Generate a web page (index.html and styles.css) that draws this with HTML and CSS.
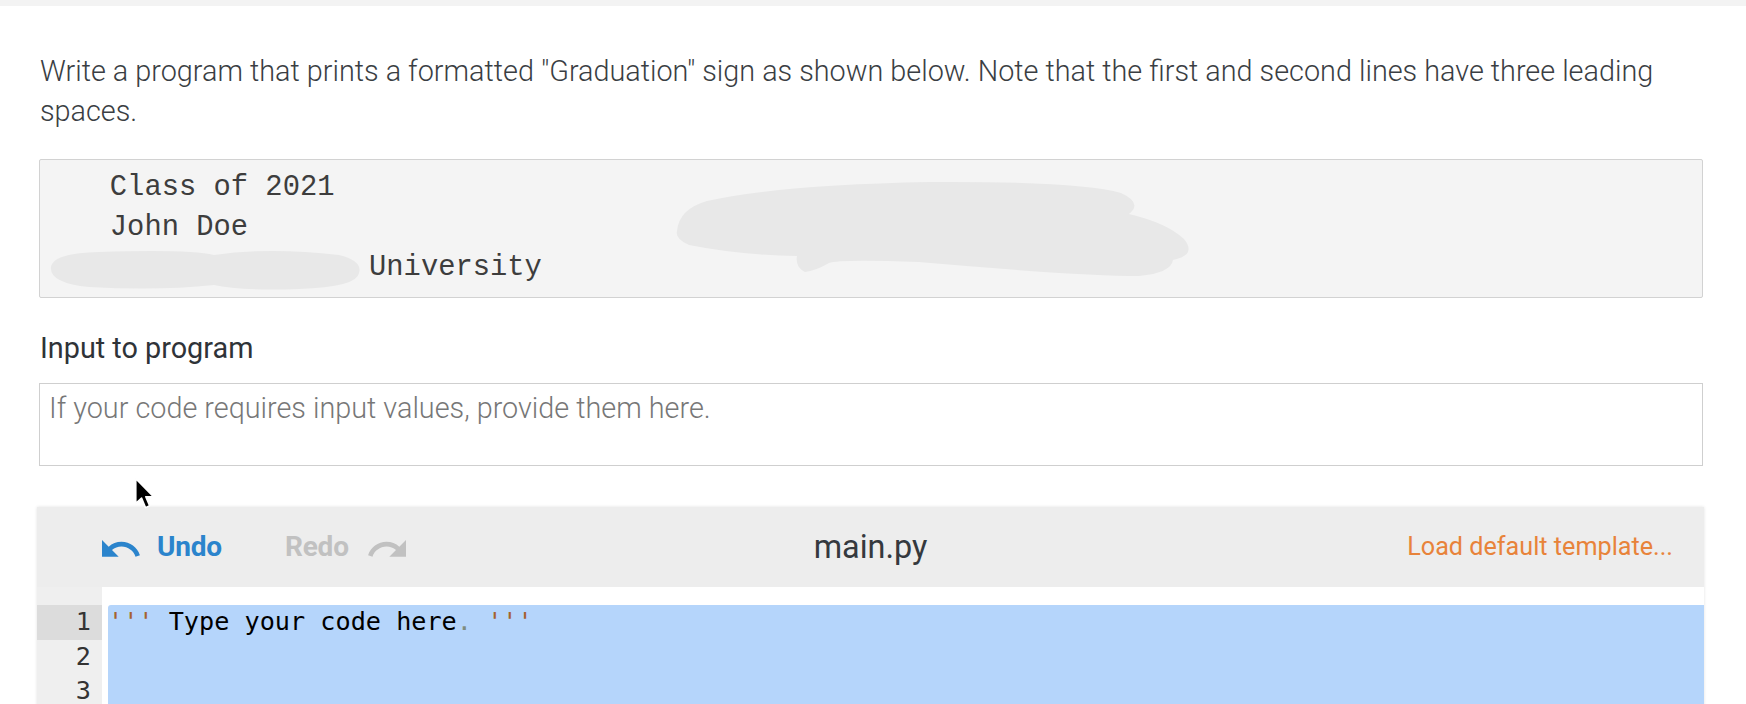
FILE: index.html
```html
<!DOCTYPE html>
<html lang="en">
<head>
<meta charset="utf-8">
<title>Graduation sign</title>
<link rel="stylesheet" href="styles.css">
</head>
<body>
<div class="topbar"></div>
<main class="content">
  <p class="prompt">Write a program that prints a formatted "Graduation" sign as shown below. Note that the first and second lines have three leading spaces.</p>
  <div class="sample-wrap">
    <pre class="sample">   Class of 2021
   John Doe
                  University</pre>
    <svg class="redact" width="1664" height="138" viewBox="0 0 1664 138" aria-hidden="true">
      <path d="M12 108 Q14 94 60 93 Q150 90 175 96 Q230 88 300 96 Q324 102 320 114 Q318 128 260 130 Q200 132 175 126 Q120 132 50 128 Q10 124 12 108 Z"/>
      <path d="M638 72 Q640 50 668 42 Q740 26 890 23 Q1040 22 1082 34 Q1104 44 1090 55 Q1128 64 1145 80 Q1158 96 1134 101 Q1132 114 1100 117 Q1040 117 880 103 Q800 100 790 104 Q776 112 766 113 Q756 108 758 97 Q700 96 650 86 Q636 80 638 72 Z"/>
    </svg>
  </div>
  <label class="input-label" for="prog-input">Input to program</label>
  <textarea id="prog-input" class="input-box" placeholder="If your code requires input values, provide them here."></textarea>
  <section class="editor">
    <div class="toolbar">
      <div class="history">
        <span class="hist-btn undo">
          <svg class="hist-icon" viewBox="2 7 20.5 9.5" width="38" height="17.6" aria-hidden="true"><path d="M12.5 8c-2.65 0-5.05.99-6.9 2.6L2 7v9h9l-3.62-3.62c1.39-1.16 3.16-1.88 5.12-1.88 3.54 0 6.55 2.31 7.6 5.5l2.37-.78C21.08 11.030 17.15 8 12.5 8z"/></svg>
          <span>Undo</span>
        </span>
        <span class="hist-btn redo">
          <span>Redo</span>
          <svg class="hist-icon" viewBox="1.5 7 20.5 9.5" width="38" height="17.6" aria-hidden="true"><path d="M18.4 10.6C16.55 8.99 14.15 8 11.5 8c-4.650 0-8.58 3.03-9.96 7.22L3.9 16c1.05-3.19 4.05-5.5 7.6-5.5 1.95 0 3.73.72 5.12 1.88L13 16h9V7l-3.6 3.6z"/></svg>
        </span>
      </div>
      <div class="filename">main.py</div>
      <div class="template">Load default template...</div>
    </div>
    <div class="code">
      <div class="gutter">
        <div class="ln active">1</div>
        <div class="ln">2</div>
        <div class="ln">3</div>
        <div class="ln">4</div>
      </div>
      <div class="lines">
        <div class="line"><span class="str">'''</span> Type your code here<span class="punct">.</span> <span class="str">'''</span></div>
        <div class="line"> </div>
        <div class="line"> </div>
        <div class="line"> </div>
      </div>
    </div>
  </section>
</main>
<svg class="pointer" width="24" height="36" viewBox="0 0 20 30" aria-hidden="true">
  <path d="M1.5 1.5 L1.5 22 L6.3 17.6 L9.6 25.5 L13 24 L9.8 16.4 L16 16.2 Z"/>
</svg>
</body>
</html>
```

FILE: styles.css
```css
html, body {
  margin: 0;
  padding: 0;
  overflow: hidden;
  background: #ffffff;
}

body {
  font-family: Roboto, "Liberation Sans", Arial, sans-serif;
  color: #3b3f44;
  position: relative;
  height: 704px;
}

.topbar {
  height: 6px;
  background: #f3f3f3;
}

.content {
  padding: 0 43px 0 39px;
  display: flex;
  flex-direction: column;
}

.prompt {
  margin: 45px 0 0 1px;
  font-size: 28.8px;
  font-weight: 300;
  line-height: 40px;
  color: #3a3e43;
}

.sample-wrap {
  position: relative;
  margin-top: 28px;
}

.sample {
  margin: 0;
  padding: 8px 18px 9px;
  background: #f4f4f4;
  border: 1px solid #d2d2d2;
  border-radius: 2px;
  font-family: "Liberation Mono", "Courier New", monospace;
  font-size: 28.8px;
  line-height: 40px;
  color: #3d3d3d;
  height: 120px;
}

.redact {
  position: absolute;
  left: 0;
  top: 0;
  fill: #e8e8e8;
}

.input-label {
  margin: 30px 0 0 1px;
  font-size: 28.8px;
  line-height: 40px;
  font-weight: 400;
  color: #2f3338;
}

.input-box {
  margin-top: 15px;
  height: 83px;
  box-sizing: border-box;
  padding: 4px 9px;
  border: 1px solid #cfcfcf;
  border-radius: 0;
  resize: none;
  font-family: Roboto, "Liberation Sans", Arial, sans-serif;
  font-size: 28.8px;
  font-weight: 300;
  line-height: 40px;
  color: #333;
  background: #fff;
  outline: none;
}

.input-box::placeholder {
  color: #777777;
  opacity: 1;
}

.editor {
  margin: 41px -1px 0 -2px;
  box-shadow: 0 0 3px rgba(0, 0, 0, 0.12);
  background: #ffffff;
}

.toolbar {
  height: 80px;
  background: #ededed;
  display: grid;
  grid-template-columns: 1fr auto 1fr;
  align-items: center;
  padding: 0 31px;
}

.history {
  display: flex;
  align-items: center;
  gap: 63px;
  margin-left: 34px;
}

.hist-btn {
  display: flex;
  align-items: center;
  gap: 17px;
  font-size: 28px;
  font-weight: 700;
  line-height: 40px;
  letter-spacing: -0.2px;
}

.hist-btn.undo {
  color: #2b84cc;
  fill: #2b84cc;
}

.hist-btn.redo {
  color: #c1c1c1;
  fill: #c1c1c1;
  gap: 19px;
}

.hist-icon {
  display: block;
  margin-top: 4px;
}

.filename {
  font-size: 32.4px;
  line-height: 40px;
  color: #35393e;
}

.template {
  justify-self: end;
  font-size: 25.2px;
  line-height: 40px;
  color: #e8833a;
}

.code {
  display: flex;
  height: 140px;
  font-family: "DejaVu Sans Mono", Menlo, monospace;
  font-size: 25.2px;
  line-height: 34.5px;
}

.gutter {
  width: 65px;
  flex: none;
  background: #efefef;
  padding-top: 18px;
  box-sizing: border-box;
}

.ln {
  text-align: right;
  padding-right: 11px;
  color: #333333;
}

.ln.active {
  background: #dcdcdc;
}

.lines {
  flex: 1;
  margin: 18px 0 0 6px;
  background: #b5d5fb;
  border-top-left-radius: 3px;
  color: #000000;
}

.line {
  white-space: pre;
  height: 34.5px;
}

.str {
  color: #a5622e;
}

.punct {
  color: #7f8c7f;
}

.pointer {
  position: absolute;
  left: 134px;
  top: 477px;
  fill: #000;
  stroke: #fff;
  stroke-width: 1.3;
  stroke-linejoin: round;
}
```
